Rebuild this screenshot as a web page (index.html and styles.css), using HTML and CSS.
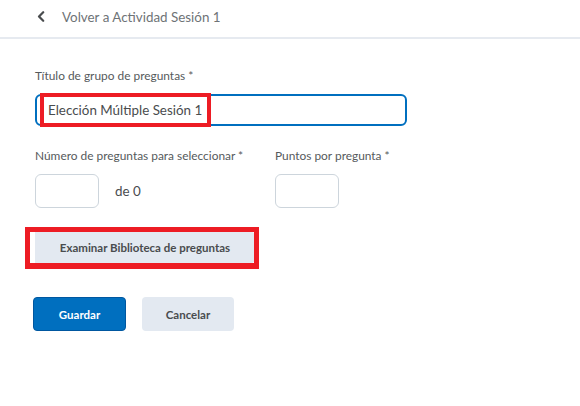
FILE: index.html
```html
<!DOCTYPE html>
<html lang="es">
<head>
<meta charset="utf-8">
<title>Grupo de preguntas</title>
<link rel="stylesheet" href="styles.css">
</head>
<body>
<header class="topbar">
  <svg class="chev" width="8" height="11" viewBox="0 0 8 11" aria-hidden="true"><path d="M6.2 1.2 L2 5.5 L6.2 9.8" fill="none" stroke="#494c4e" stroke-width="2.2" stroke-linecap="round" stroke-linejoin="round"/></svg>
  <span class="back">Volver a Actividad Sesión 1</span>
</header>
<main class="form">
  <div class="field">
    <label class="label">Título de grupo de preguntas *</label>
    <div class="annot-wrap">
      <div class="input wide focused">Elección Múltiple Sesión 1</div>
      <div class="mark mark-title"></div>
    </div>
  </div>
  <div class="row">
    <div class="field col-a">
      <label class="label">Número de preguntas para seleccionar *</label>
      <div class="inline">
        <div class="input small"></div>
        <span class="of">de 0</span>
      </div>
    </div>
    <div class="field">
      <label class="label">Puntos por pregunta *</label>
      <div class="input small"></div>
    </div>
  </div>
  <div class="annot-wrap browse">
    <button class="btn btn-secondary btn-browse">Examinar Biblioteca de preguntas</button>
    <div class="mark mark-browse"></div>
  </div>
  <div class="actions">
    <button class="btn btn-primary">Guardar</button>
    <button class="btn btn-secondary">Cancelar</button>
  </div>
</main>
</body>
</html>
```
FILE: styles.css
```css
* { box-sizing: border-box; }
html, body { margin: 0; padding: 0; background: #fff; }
body {
  font-family: Lato, "Open Sans", "Liberation Sans", sans-serif;
  color: #494c4e;
  width: 580px;
  height: 406px;
  overflow: hidden;
}
.topbar {
  height: 39px;
  border-bottom: 2px solid #e6eaf0;
  display: flex;
  align-items: center;
  padding-left: 37px;
  padding-bottom: 4px;
  gap: 17px;
}
.chev { display: block; }
.back {
  font-size: 13.4px;
  color: #6e7376;
}
.form {
  padding: 28px 0 0 35px;
}
.field { display: flex; flex-direction: column; }
.label {
  font-size: 11.9px;
  line-height: 18px;
  color: #565a5c;
  margin-bottom: 9px;
}
.annot-wrap { position: relative; }
.input {
  border: 1px solid #cdd5dc;
  border-radius: 6px;
  background: #fff;
  height: 34px;
}
.input.wide {
  width: 372px;
  height: 32px;
  font-size: 13.4px;
  line-height: 28px;
  padding-left: 11px;
  color: #494c4e;
}
.input.focused { border: 2px solid #006fbf; }
.input.small { width: 64px; }
.row {
  display: flex;
  margin-top: 21px;
}
.col-a { width: 240px; }
.inline { display: flex; align-items: center; gap: 16px; }
.of { font-size: 13.4px; color: #494c4e; }
.mark {
  position: absolute;
  border: 4px solid #ed1c24;
  pointer-events: none;
}
.mark-title { left: 5px; top: -1px; width: 171px; height: 34px; }
.browse { margin-top: 24px; width: 220px; }
.mark-browse { left: -10px; top: -5px; width: 234px; height: 42px; border-width: 5px 5px 6px 5px; }
.btn {
  font-family: inherit;
  font-weight: 700;
  font-size: 11.5px;
  border: none;
  border-radius: 4px;
  cursor: pointer;
  display: block;
}
.btn-secondary { background: #e3e9f1; color: #494c4e; }
.btn-primary { background: #006fbf; color: #fff; border: 1px solid #0057a0; }
.btn-browse { width: 220px; height: 31px; border-radius: 0 4px 4px 0; }
.actions {
  display: flex;
  gap: 16px;
  margin-top: 34px;
  margin-left: -2px;
}
.actions .btn { width: 93px; height: 34px; }
.actions .btn-secondary { width: 92px; }
```
